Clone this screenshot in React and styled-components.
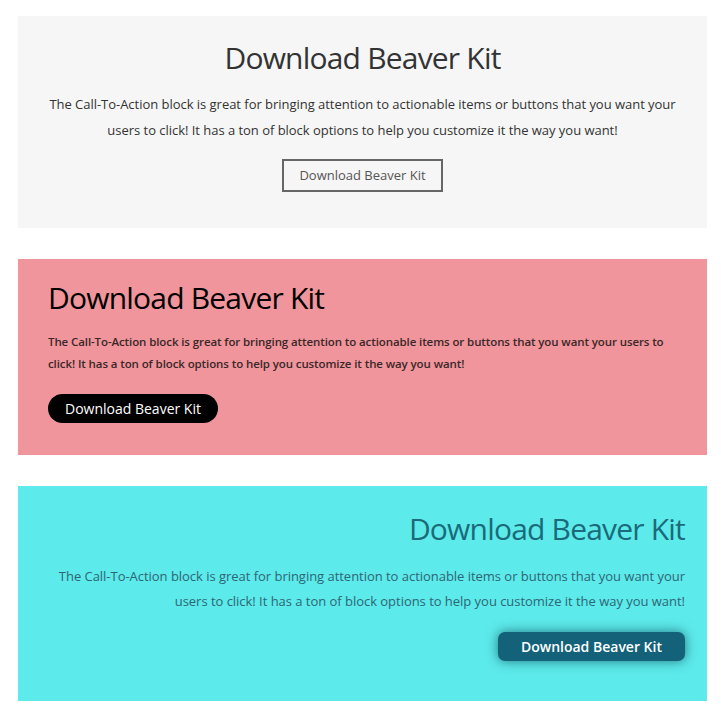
import React from 'react'
import styled, { createGlobalStyle } from 'styled-components'

const GlobalStyle = createGlobalStyle`
  body {
    margin: 0;
    background: #ffffff;
    font-family: "Open Sans", "Noto Sans", sans-serif;
  }
`

const Page = styled.div`
  padding: 16px 14px 16px 18px;
  display: flex;
  flex-direction: column;
  gap: 31px;
`

const Block = styled.section`
  background: ${props => props.bg};
  text-align: ${props => props.align};
  padding: ${props => props.pad};
  display: flex;
  flex-direction: column;
  align-items: ${props => props.align === 'center' ? 'center' : props.align === 'right' ? 'flex-end' : 'flex-start'};
`

const Title = styled.h2`
  margin: 0 0 ${props => props.gap || 16}px 0;
  font-size: 30px;
  font-weight: 500;
  letter-spacing: -0.8px;
  line-height: 34px;
  color: ${props => props.color};
`

const Text = styled.p`
  margin: 0 0 ${props => props.gap}px 0;
  font-size: ${props => props.size}px;
  line-height: ${props => props.lh}px;
  letter-spacing: ${props => props.ls}px;
  font-weight: ${props => props.weight || 400};
  color: ${props => props.color};
`

const OutlineButton = styled.a`
  display: inline-block;
  border: 2px solid #666;
  color: #555;
  font-size: 13px;
  font-weight: 500;
  line-height: 29px;
  padding: 0 15px;
  text-decoration: none;
`

const PillButton = styled.a`
  display: inline-block;
  background: #000;
  color: #fff;
  font-size: 14px;
  line-height: 29px;
  padding: 0 17px;
  border-radius: 15px;
  text-decoration: none;
`

const ShadowButton = styled.a`
  display: inline-block;
  background: #13627a;
  color: #fff;
  font-size: 14px;
  font-weight: 600;
  line-height: 29px;
  padding: 0 23px;
  border-radius: 7px;
  box-shadow: 0 0 12px rgba(10, 70, 85, 0.7);
  text-decoration: none;
`

const copy = 'The Call-To-Action block is great for bringing attention to actionable items or buttons that you want your users to click! It has a ton of block options to help you customize it the way you want!'

export default function App() {
  return (
    <>
      <GlobalStyle />
      <Page>
        <Block bg="#f6f6f6" align="center" pad="25px 30px 36px">
          <Title color="#333">Download Beaver Kit</Title>
          <Text size={13} lh={26} ls={-0.03} gap={16} color="#333">{copy}</Text>
          <OutlineButton>Download Beaver Kit</OutlineButton>
        </Block>

        <Block bg="#f1959c" align="left" pad="22px 30px 32px">
          <Title color="#000">Download Beaver Kit</Title>
          <Text size={11.5} lh={22} ls={-0.1} gap={19} weight={600} color="#3a2828">{copy}</Text>
          <PillButton>Download Beaver Kit</PillButton>
        </Block>

        <Block bg="#5deaea" align="right" pad="26px 22px 40px">
          <Title color="#1a6a7a" gap={18}>Download Beaver Kit</Title>
          <Text size={13} lh={25} ls={-0.03} gap={18} color="#2d6676">{copy}</Text>
          <ShadowButton>Download Beaver Kit</ShadowButton>
        </Block>
      </Page>
    </>
  )
}
